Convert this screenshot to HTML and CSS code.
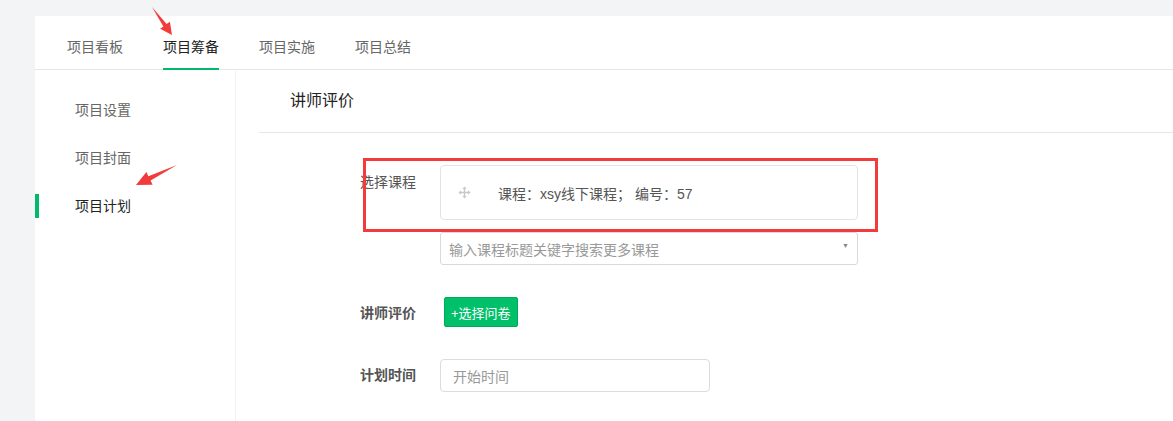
FILE: index.html
```html
<!DOCTYPE html>
<html lang="zh-CN">
<head>
  <meta charset="UTF-8">
  <title>项目筹备 - 项目计划</title>
  <link rel="stylesheet" href="styles.css">
</head>
<body>
  <div class="panel">
    <div class="tabs">
      <div class="tab">项目看板</div>
      <div class="tab active">项目筹备</div>
      <div class="tab">项目实施</div>
      <div class="tab">项目总结</div>
    </div>

    <div class="content">
      <div class="sidebar">
        <div class="side-item">项目设置</div>
        <div class="side-item">项目封面</div>
        <div class="side-item active">项目计划</div>
      </div>

      <div class="main">
        <div class="main-title">讲师评价</div>

        <div class="form">
          <div class="form-row">
            <div class="label light">选择课程</div>
            <div class="field">
              <div class="course-card">
                <svg class="move-icon" width="13" height="13" viewBox="0 0 13 13">
                  <path d="M6.5 0.5 L8.7 3 H7.2 V5.8 H10 V4.3 L12.5 6.5 L10 8.7 V7.2 H7.2 V10 H8.7 L6.5 12.5 L4.3 10 H5.8 V7.2 H3 V8.7 L0.5 6.5 L3 4.3 V5.8 H5.8 V3 H4.3 Z" fill="#c8c8c8"/>
                </svg>
                <span class="course-text">课程：xsy线下课程； 编号：57</span>
              </div>
              <div class="select">
                <span class="placeholder">输入课程标题关键字搜索更多课程</span>
                <span class="caret">▼</span>
              </div>
            </div>
          </div>

          <div class="form-row">
            <div class="label">讲师评价</div>
            <div class="field">
              <button class="btn-green">+选择问卷</button>
            </div>
          </div>

          <div class="form-row">
            <div class="label">计划时间</div>
            <div class="field">
              <div class="date-input"><span class="placeholder">开始时间</span></div>
            </div>
          </div>
        </div>
      </div>
    </div>
  </div>

  <!-- annotations drawn over the screenshot -->
  <div class="mark-box"></div>
  <svg class="mark-arrows" width="200" height="200" viewBox="0 0 200 200">
    <polygon points="152,7 166.6,24.1 169.9,21.8 172,35 160.1,28.8 163.4,26.5" fill="#f23c3c"/>
    <polygon points="177,165 150.6,180.6 152.6,184.7 136,185 146.4,172.1 148.4,176.2" fill="#f23c3c"/>
  </svg>
</body>
</html>
```

FILE: styles.css
```css
body {
  margin: 0;
  padding: 16px 0 0 35px;
  background-color: #f3f4f6;
  font-family: "Liberation Sans", "Noto Sans CJK SC", sans-serif;
  font-size: 14px;
  color: #666;
  position: relative;
}
.panel {
  background-color: #fff;
  min-height: 405px;
}
.tabs {
  display: flex;
  gap: 40px;
  height: 53px;
  padding-left: 32px;
  border-bottom: 1px solid #e6e6e6;
}
.tab {
  height: 54px;
  box-sizing: border-box;
  padding-top: 21px;
  line-height: 20px;
  color: #666;
}
.tab.active {
  color: #222;
  border-bottom: 2px solid #00b96b;
}
.content {
  display: flex;
}
.sidebar {
  width: 200px;
  min-height: 335px;
  border-right: 1px solid #f2f2f2;
  display: flex;
  flex-direction: column;
  gap: 24px;
  padding-top: 28px;
}
.side-item {
  line-height: 24px;
  padding-left: 40px;
  color: #666;
}
.side-item.active {
  color: #222;
  border-left: 4px solid #00b96b;
  padding-left: 36px;
}
.main {
  flex: 1;
  padding-left: 23px;
}
.main-title {
  padding: 20px 0 20px 31px;
  line-height: 22px;
  font-size: 16px;
  color: #222;
  border-bottom: 1px solid #e6e6e6;
}
.form {
  padding: 32px 0 0 101px;
  display: flex;
  flex-direction: column;
  gap: 32px;
}
.form-row {
  display: flex;
}
.label {
  width: 80px;
  flex-shrink: 0;
  font-weight: bold;
  color: #555;
  line-height: 20px;
  padding-top: 6px;
}
.label.light {
  font-weight: normal;
  padding-top: 7px;
}
.field {
  display: flex;
  flex-direction: column;
  gap: 12px;
}
.course-card {
  width: 399px;
  height: 53px;
  border: 1px solid #e3e3e3;
  border-radius: 4px;
  display: flex;
  align-items: center;
  padding-left: 17px;
}
.move-icon {
  margin-right: 27px;
}
.course-text {
  color: #555;
}
.select {
  width: 400px;
  height: 31px;
  border: 1px solid #d9d9d9;
  border-radius: 3px;
  display: flex;
  align-items: center;
  justify-content: space-between;
  padding: 0 8px;
}
.placeholder {
  color: #999;
}
.caret {
  font-size: 7px;
  color: #888;
  margin-top: -6px;
}
.btn-green {
  margin-left: 4px;
  height: 30px;
  padding: 0 6px;
  border: 1px solid #03a85c;
  border-radius: 2px;
  background-color: #00c16a;
  color: #fff;
  font-family: inherit;
  font-size: 13px;
  cursor: pointer;
}
.date-input {
  width: 256px;
  height: 31px;
  border: 1px solid #dcdcdc;
  border-radius: 4px;
  display: flex;
  align-items: center;
  padding-left: 12px;
}
.mark-box {
  position: absolute;
  left: 363px;
  top: 158px;
  width: 509px;
  height: 68px;
  border: 3px solid #f23c3c;
}
.mark-arrows {
  position: absolute;
  left: 0;
  top: 0;
}
```
